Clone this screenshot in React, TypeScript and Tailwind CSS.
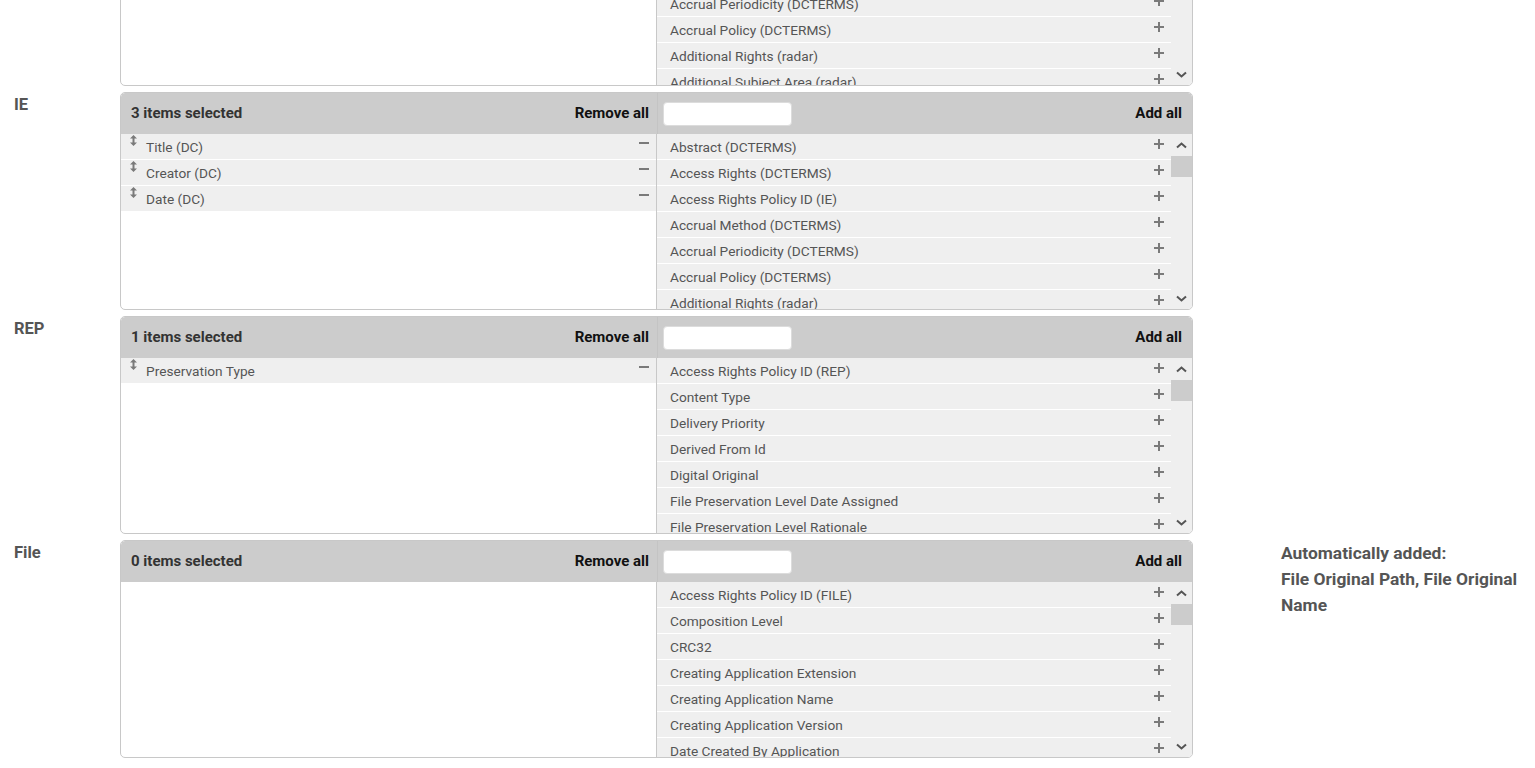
import React from 'react';

type Block = {
  label: string;
  selected: string[];
  available: string[];
  offset?: boolean;
};

const blocks: Block[] = [
  {
    label: 'Collection',
    selected: [],
    offset: true,
    available: [
      'Abstract (DCTERMS)',
      'Access Rights (DCTERMS)',
      'Accrual Method (DCTERMS)',
      'Accrual Periodicity (DCTERMS)',
      'Accrual Policy (DCTERMS)',
      'Additional Rights (radar)',
      'Additional Subject Area (radar)',
    ],
  },
  {
    label: 'IE',
    selected: ['Title (DC)', 'Creator (DC)', 'Date (DC)'],
    available: [
      'Abstract (DCTERMS)',
      'Access Rights (DCTERMS)',
      'Access Rights Policy ID (IE)',
      'Accrual Method (DCTERMS)',
      'Accrual Periodicity (DCTERMS)',
      'Accrual Policy (DCTERMS)',
      'Additional Rights (radar)',
    ],
  },
  {
    label: 'REP',
    selected: ['Preservation Type'],
    available: [
      'Access Rights Policy ID (REP)',
      'Content Type',
      'Delivery Priority',
      'Derived From Id',
      'Digital Original',
      'File Preservation Level Date Assigned',
      'File Preservation Level Rationale',
    ],
  },
  {
    label: 'File',
    selected: [],
    available: [
      'Access Rights Policy ID (FILE)',
      'Composition Level',
      'CRC32',
      'Creating Application Extension',
      'Creating Application Name',
      'Creating Application Version',
      'Date Created By Application',
    ],
  },
];

function DragIcon() {
  return (
    <svg width="7" height="11" viewBox="0 0 7 11" className="mt-[1px] shrink-0">
      <path d="M3.5 0 L7 3.5 H4.5 V7.5 H7 L3.5 11 L0 7.5 H2.5 V3.5 H0 Z" fill="#7a7a7a" />
    </svg>
  );
}

function MinusIcon() {
  return <span className="mt-[8px] block h-[2px] w-[10px] shrink-0 bg-[#7a7a7a]" />;
}

function PlusIcon() {
  return (
    <svg width="10" height="10" viewBox="0 0 10 10" className="mt-[5px] shrink-0">
      <path d="M4 0 H6 V4 H10 V6 H6 V10 H4 V6 H0 V4 H4 Z" fill="#7a7a7a" />
    </svg>
  );
}

function Chevron({ down }: { down?: boolean }) {
  return (
    <svg width="11" height="7" viewBox="0 0 11 7">
      <path
        d={down ? 'M1 1.5 L5.5 5.5 L10 1.5' : 'M1 5.5 L5.5 1.5 L10 5.5'}
        fill="none"
        stroke="#555"
        strokeWidth="2"
      />
    </svg>
  );
}

function MultiSelect({ block }: { block: Block }) {
  return (
    <div className="flex h-[218px] w-[1073px] flex-col overflow-hidden rounded-[5px] border border-[#c8c8c8] bg-white">
      {/* Header */}
      <div className="flex h-[41px] shrink-0 rounded-t-[4px] bg-[#cccccc]">
        <div className="flex w-[536px] items-center justify-between pl-[10px] pr-[8px]">
          <span className="text-[15px] font-bold text-[#333]">{block.selected.length} items selected</span>
          <span className="text-[15px] font-bold text-[#111]">Remove all</span>
        </div>
        <div className="flex flex-1 items-center justify-between border-l border-[#c4c4c4] pl-[5px] pr-[10px]">
          <div className="h-[24px] w-[129px] rounded-[4px] border border-[#dcdcdc] bg-white" />
          <span className="text-[15px] font-bold text-[#111]">Add all</span>
        </div>
      </div>

      {/* Lists */}
      <div className="flex min-h-0 flex-1">
        <div className="w-[536px] overflow-hidden border-r border-[#c8c8c8]">
          {block.selected.map((item) => (
            <div
              key={item}
              className="flex h-[26px] items-start border-b border-white bg-[#efefef] pl-[9px] pr-[7px]"
            >
              <DragIcon />
              <span className="ml-[9px] flex-1 pt-[1px] text-[13.7px] leading-[25px] text-[#555]">{item}</span>
              <MinusIcon />
            </div>
          ))}
        </div>
        <div className="flex flex-1 bg-[#efefef]">
          <div className="flex-1 overflow-hidden">
            {block.offset && <div className="h-[3px] border-b border-white" />}
            {block.available.map((item) => (
              <div
                key={item}
                className="flex h-[26px] items-start border-b border-white pl-[13px] pr-[7px]"
              >
                <span className="flex-1 pt-[1px] text-[13.7px] leading-[25px] text-[#555]">{item}</span>
                <PlusIcon />
              </div>
            ))}
          </div>
          <div className="flex w-[21px] flex-col">
            <div className="flex h-[22px] items-center justify-center">
              <Chevron />
            </div>
            <div className="h-[21px] bg-[#cccccc]" />
            <div className="flex-1" />
            <div className="flex h-[22px] items-center justify-center">
              <Chevron down />
            </div>
          </div>
        </div>
      </div>
    </div>
  );
}

export default function App() {
  return (
    <div className="h-[768px] overflow-hidden bg-white font-['Roboto',sans-serif]">
      <div className="-mt-[132px] flex flex-col gap-[6px]">
        {blocks.map((block) => (
          <div key={block.label} className="flex">
            <div className="w-[120px] shrink-0 pl-[14px] pt-[3px] text-[16.5px] font-bold leading-[20px] text-[#555]">
              {block.label}
            </div>
            <MultiSelect block={block} />
            {block.label === 'File' && (
              <div className="ml-[88px] w-[250px] text-[17.4px] font-bold leading-[26px] text-[#555]">
                <div>Automatically added:</div>
                <div>File Original Path, File Original Name</div>
              </div>
            )}
          </div>
        ))}
      </div>
    </div>
  );
}
